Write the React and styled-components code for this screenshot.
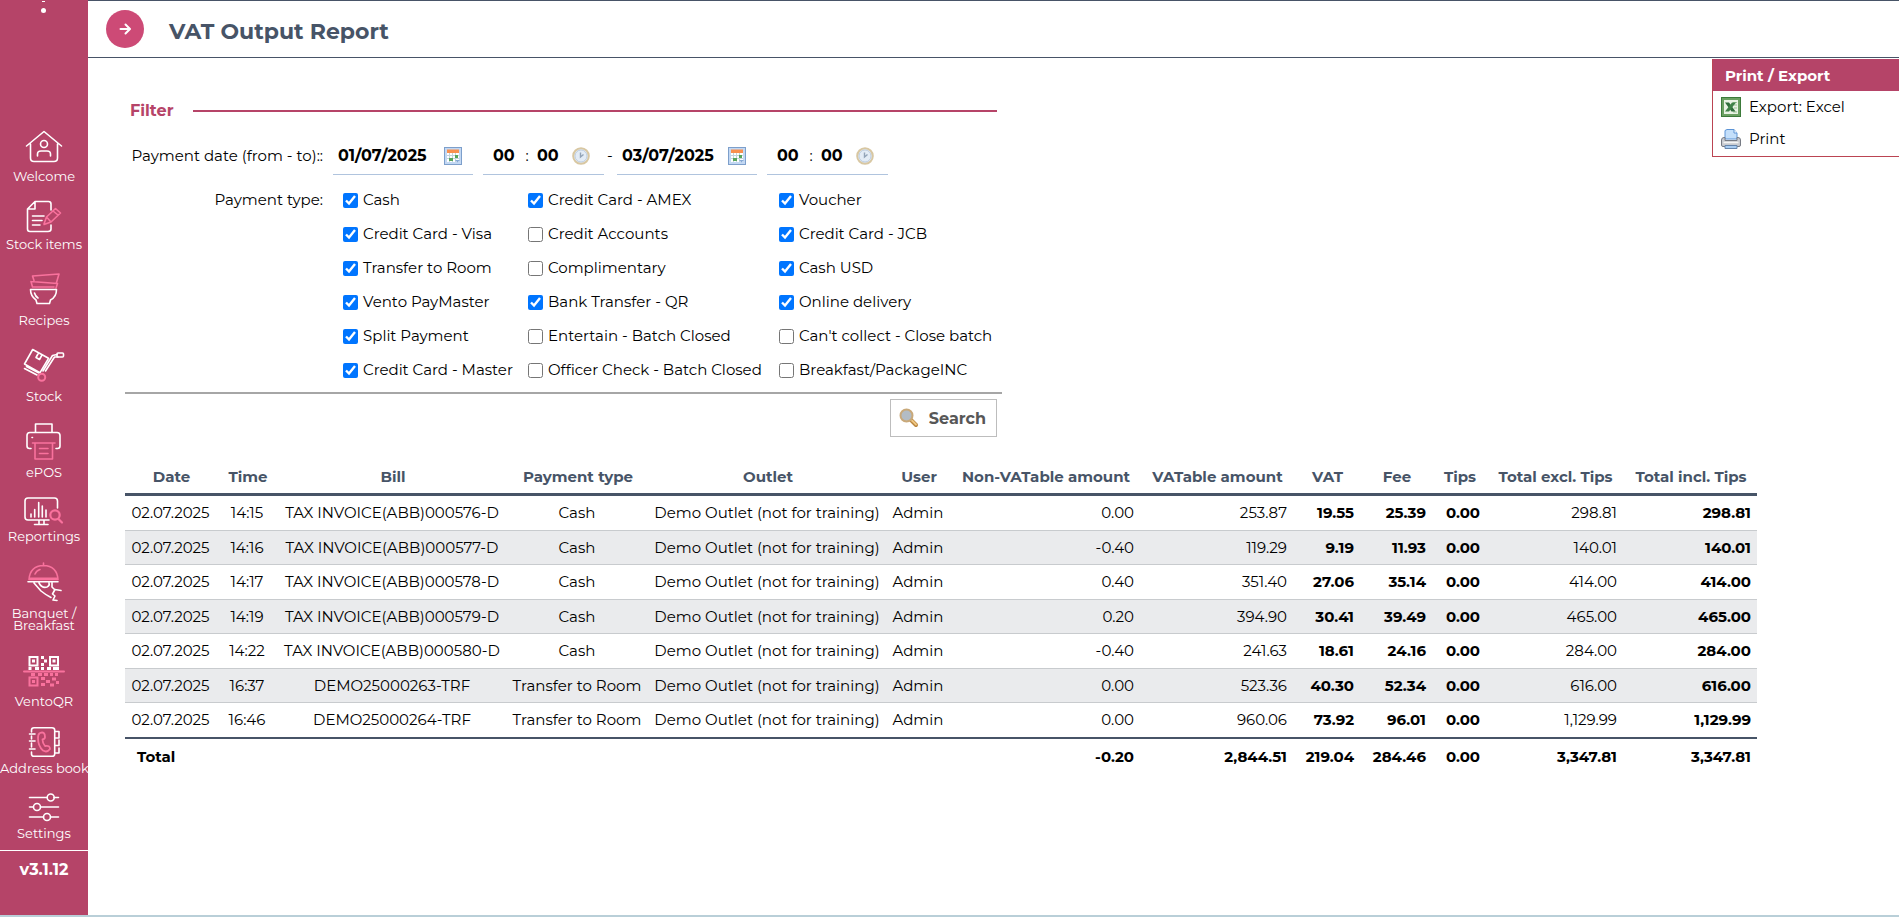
import React, { useState } from 'react'
import styled, { createGlobalStyle } from 'styled-components'

const GlobalStyle = createGlobalStyle`
    * {
        box-sizing: border-box;
    }
    body {
        margin: 0;
        background: white;
        color: black;
        font-family: Montserrat, Inter, sans-serif;
        font-size: 15px;
        line-height: 20px;
    }
    input, button {
        font-family: inherit;
    }
`

const Page = styled.div`
    display: flex;
    min-height: 100vh;
    border-bottom: 2px solid #b9cfd8;
`

const Sidebar = styled.nav`
    flex: 0 0 88px;
    min-width: 0;
    background: #b54468;
    color: white;
`

const Brand = styled.div`
    height: 108px;
    text-align: center;
`

const MenuLink = styled.a`
    display: block;
    padding-top: 12px;
    color: white;
    font-size: 13px;
    line-height: ${props => props.$twoLines ? '12px' : '16px'};
    text-align: center;
    text-decoration: none;
    white-space: pre;
    svg {
        display: block;
        margin: 0 auto;
    }
`

const Version = styled.div`
    margin-top: 9px;
    padding-top: 9px;
    border-top: 1px solid white;
    font-size: 16px;
    font-weight: 700;
    text-align: center;
`

const Main = styled.main`
    flex: 1;
    min-width: 0;
`

const Header = styled.header`
    display: flex;
    align-items: center;
    gap: 25px;
    height: 58px;
    padding-left: 18px;
    border-top: 1px solid #475467;
    border-bottom: 1px solid #475467;
`

const RoundButton = styled.button`
    display: flex;
    align-items: center;
    justify-content: center;
    width: 38px;
    height: 38px;
    padding: 0;
    border: 0;
    border-radius: 50%;
    background: #cd4a76;
`

const Title = styled.h1`
    margin: 0;
    padding-top: 6px;
    color: #475467;
    font-size: 22px;
    line-height: 28px;
    font-weight: 700;
`

const TopRow = styled.div`
    display: flex;
    align-items: flex-start;
    justify-content: space-between;
    padding-left: 37px;
`

const FilterForm = styled.form`
    width: 877px;
    padding-top: 43px;
`

const FilterTitle = styled.h2`
    display: flex;
    align-items: center;
    gap: 19px;
    margin: 0 5px 16px;
    color: #b64468;
    font-size: 16px;
    line-height: 20px;
    font-weight: 700;
    &::after {
        content: '';
        flex: 1;
        height: 2px;
        background: #b64468;
    }
`

const FormRow = styled.div`
    display: grid;
    grid-template-columns: 193px 1fr;
    gap: 10px;
    padding-left: 5px;
    margin-bottom: 8px;
`

const RowLabel = styled.div`
    line-height: ${props => props.$height};
    text-align: right;
    white-space: nowrap;
`

const Fields = styled.div`
    display: flex;
    align-items: center;
    gap: 10px;
`

const Field = styled.div`
    display: flex;
    align-items: center;
    width: ${props => props.$wide ? '140px' : '121px'};
    height: 38px;
    padding: 0 0 0 ${props => props.$wide ? '5px' : '10px'};
    border-bottom: 1px solid #b0c4de;
`

const Dash = styled.span`
    width: 13px;
    margin-right: -10px;
    padding-left: 3px;
    margin-left: -10px;
`

const TextInput = styled.input`
    width: ${props => props.$wide ? '106px' : '24px'};
    padding: 0;
    border: 0;
    outline: 0;
    background: none;
    color: black;
    font-size: 16px;
    line-height: 20px;
    font-weight: 700;
`

const Colon = styled.span`
    width: 20px;
    text-align: center;
`

const IconButton = styled.button`
    display: flex;
    width: 18px;
    height: 18px;
    margin-left: ${props => props.$gap || 0};
    padding: 0;
    border: 0;
    background: none;
`

const CheckGrid = styled.div`
    display: grid;
    grid-template-columns: 185px 251px 1fr;
    grid-auto-rows: 34px;
    padding-left: 10px;
`

const CheckLabel = styled.label`
    display: flex;
    align-items: center;
    gap: 5px;
    white-space: nowrap;
`

const CheckBox = styled.input`
    width: 15px;
    height: 15px;
    margin: 0;
    accent-color: #0075ff;
`

const Actions = styled.div`
    display: flex;
    justify-content: flex-end;
    padding: 5px 5px 0;
    margin-top: -3px;
    border-top: 2px solid #a6a6a6;
`

const SearchButton = styled.button`
    display: flex;
    align-items: center;
    justify-content: space-between;
    width: 107px;
    height: 38px;
    padding: 0 10px 0 8px;
    border: 1px solid #bdbdbd;
    background: white;
    color: #575757;
    font-size: 16px;
    font-weight: 700;
`

const Panel = styled.aside`
    width: 187px;
    margin-top: 1px;
    padding-bottom: 1px;
    border-left: 1px solid #bb4452;
    border-bottom: 1px solid #bb4452;
`

const PanelTitle = styled.h2`
    margin: 0;
    padding: 7px 12px 5px;
    background: #b54468;
    color: white;
    font-size: 15px;
    line-height: 20px;
    font-weight: 700;
`

const PanelLink = styled.a`
    display: flex;
    align-items: center;
    gap: 8px;
    height: 32px;
    padding-left: 8px;
    color: black;
    text-decoration: none;
`

const Table = styled.table`
    width: 1632px;
    margin: 23px 0 0 37px;
    border-collapse: separate;
    border-spacing: 0;
    white-space: nowrap;
`

const Th = styled.th`
    height: 36px;
    padding: 0 0 0 2px;
    border-bottom: 3px solid #475467;
    color: #475467;
    font-size: 15px;
    font-weight: 700;
    text-align: center;
`

const Td = styled.td`
    padding: 0 6px;
    border-bottom: 1px solid #c8cbce;
    font-weight: ${props => props.$bold ? 700 : 400};
    text-align: ${props => props.$right ? 'right' : 'center'};
`

const Row = styled.tr`
    height: 35px;
    &:nth-child(even) {
        height: 34px;
        background: #eaebed;
    }
    &:last-child {
        height: 36px;
    }
    &:last-child td {
        border-bottom: 2px solid #475467;
    }
`

const TotalCell = styled.td`
    height: 35px;
    padding: 0 6px;
    font-weight: 700;
    text-align: right;
    &:first-child {
        padding-left: 12px;
        text-align: left;
    }
`

const pink = '#f9729d'

const line = { fill: 'none', stroke: 'white', strokeWidth: 1.6, strokeLinecap: 'round', strokeLinejoin: 'round' }

const menu = [
    {
        name: 'Welcome', height: 48, icon: <>
            <path d="M12.500 26L30 11.500L47.500 26M16.500 24V38Q16.500 41.500 20 41.500H40Q43.500 41.500 43.500 38V24" />
            <circle cx="30" cy="24" r="3.500" />
            <path d="M23.500 36V34Q23.500 31 27 31H33Q36.500 31 36.500 34V36" />
        </>
    },
    {
        name: 'Stock items', height: 40, icon: <>
            <path d="M37 14V8Q37 5.500 34.500 5.500H21L13.500 13V33Q13.500 35.500 16 35.500H34Q37 35.500 37 33V29M21 6V13H14M18.500 20H30M18.500 24.500H28M18.500 29H26" />
            <path stroke={pink} d="M30 28L32.500 21L41.500 12.500L46.500 17L37 26L30 28.500M32.500 21L37 26M39 15L44 19" />
        </>
    },
    {
        name: 'Recipes', height: 48, icon: <>
            <path stroke={pink} d="M18.500 12L45 10L42.500 18.500M18.500 12L20 16.500M17 17.500L43.500 19.500L42 24M17 17.500L18.500 23H40" />
            <path d="M16.500 25.500H42.500Q42.500 33 36.500 36L35.500 39.500H23L22 36Q16.500 32 16.500 25.500ZM20.500 29Q21.500 32.500 24 34" />
        </>
    },
    {
        name: 'Stock', height: 48, icon: <>
            <path d="M18.700 9.500L34.500 18.300L26 32.700L10.500 24ZM24.500 13L22 17.500L25.500 19.500L28 15M10.500 28.500L23 35M12.500 26.500L24.500 32.800M29 31L38.500 15.500L43 14.500M31.500 31L40.500 17H44" />
            <rect x="43" y="13" width="6.500" height="4" rx="1" />
            <circle stroke={pink} strokeWidth="2" cx="27.700" cy="37.300" r="3.500" />
        </>
    },
    {
        name: 'ePOS', height: 48, icon: <>
            <path d="M21.500 16V8H38V16M17 32.500H15.500Q13 32.500 13 30V19.500Q13 16.500 16 16.500H43Q46 16.500 46 19.500V30Q46 32.500 43.500 32.500H42M18 21.500H18.500" />
            <path stroke={pink} d="M18.500 27H41M21 27V43H38.500V27M25.500 32.500H34M25.500 37.500H34" />
        </>
    },
    {
        name: 'Reportings', height: 36, icon: <>
            <path d="M35 28H14Q11 28 11 25V9Q11 6 14 6H40.500Q43.500 6 43.500 9V16M25 28V32M30 28V32M20.500 32.500H34" />
            <path d="M17 25V22M20.700 25V17.500M24.700 25V10.500M28.300 25V14M32 25V18" />
            <g stroke={pink} strokeWidth="2.200"><circle cx="41" cy="23" r="4.700" /><path d="M44.500 27L48 30.500" /></g>
        </>
    },
    {
        name: 'Banquet /\nBreakfast', height: 51, twoLines: true, icon: <>
            <g stroke={pink}>
                <path fill={pink} stroke="none" d="M15 24V21.500H44V24Z" />
                <path d="M15 23.500Q16 10 29.500 9.500Q43 10 44 23.500ZM29.500 9V7M21 18Q22.500 14.500 26 13.500" />
            </g>
            <path d="M14 25.800H44M20 27L27 35Q32 39 37 41.500M25 27Q28 32.500 33 31Q36 30 35 27M38 27V31L40 33M47 34.500L41 33.500L38.500 38L41 40L39 44L43 44.500" />
        </>
    },
    {
        name: 'VentoQR', height: 50, icon: <>
            <g strokeWidth="2" strokeLinejoin="miter">
                <path d="M15.500 14H23.500V22.500H15.500ZM36 14H44V22.500H36Z" />
                <path stroke={pink} d="M15.500 34.500H23.500V42.500H15.500Z" />
            </g>
            <path strokeWidth="3" strokeLinecap="butt" d="M18 18H21M38.500 18H41.500M27 14.500H30M30 18H33M27 21.500H30M14.500 25.500H17.500M21 25.500H25M27 25.500H30M33 25.500H37M39 25.500H45" />
            <path stroke={pink} strokeWidth="3" strokeLinecap="butt" d="M17 31.500H21M24 31.500H28M30 31.500H34M36 31.500H39M41 31.500H44M18 38.500H21M27 35.500H31M32 38.500H36M27 41.500H31M38 36H42M42 39.500H45M36 42H40" />
            <path stroke={pink} strokeWidth="2" d="M10 28.500H50" />
        </>
    },
    {
        name: 'Address book', height: 39, icon: <>
            <path d="M17.500 11V9Q17.500 6.700 20 6.700H38Q40.700 6.700 40.700 9V33Q40.700 35.300 38 35.300H20Q17.500 35.300 17.500 33V31M17.500 15V18M17.500 22V26M15.500 13H21M15.500 20H21M15.500 28H21M41 10.500H45V17H41M45 19V24.500H41M45 27V32H41" />
            <path stroke={pink} strokeWidth="1.800" d="M26 12Q31 10 31 16Q31 18 28.500 18.500Q28.500 22 31 25Q36 24 36 28Q33 32 29 29.500Q24 25 24 17Q24 13 26 12Z" />
        </>
    },
    {
        name: 'Settings', height: 37, icon: <>
            <path d="M15.500 9.500H33M40 9.500H44.500M15.500 19H19M26.500 19H44.500M15.500 29H29.500M36.500 29H44.500" />
            <circle cx="36.700" cy="9.500" r="3.500" />
            <circle cx="23" cy="19" r="3.500" />
            <circle cx="33" cy="29" r="3.500" />
        </>
    },
]

const paymentTypes = [
    ['Cash', true], ['Credit Card - AMEX', true], ['Voucher', true],
    ['Credit Card - Visa', true], ['Credit Accounts', false], ['Credit Card - JCB', true],
    ['Transfer to Room', true], ['Complimentary', false], ['Cash USD', true],
    ['Vento PayMaster', true], ['Bank Transfer - QR', true], ['Online delivery', true],
    ['Split Payment', true], ['Entertain - Batch Closed', false], ["Can't collect - Close batch", false],
    ['Credit Card - Master', true], ['Officer Check - Batch Closed', false], ['Breakfast/PackageINC', false],
]

const columns = [
    ['Date', 91], ['Time', 62], ['Bill', 228], ['Payment type', 142], ['Outlet', 238], ['User', 64],
    ['Non-VATable amount', 190], ['VATable amount', 153], ['VAT', 67], ['Fee', 72], ['Tips', 54],
    ['Total excl. Tips', 137], ['Total incl. Tips', 134],
]

const outlet = 'Demo Outlet (not for training)'

const bills = [
    ['02.07.2025', '14:15', 'TAX INVOICE(ABB)000576-D', 'Cash', outlet, 'Admin', '0.00', '253.87', '19.55', '25.39', '0.00', '298.81', '298.81'],
    ['02.07.2025', '14:16', 'TAX INVOICE(ABB)000577-D', 'Cash', outlet, 'Admin', '-0.40', '119.29', '9.19', '11.93', '0.00', '140.01', '140.01'],
    ['02.07.2025', '14:17', 'TAX INVOICE(ABB)000578-D', 'Cash', outlet, 'Admin', '0.40', '351.40', '27.06', '35.14', '0.00', '414.00', '414.00'],
    ['02.07.2025', '14:19', 'TAX INVOICE(ABB)000579-D', 'Cash', outlet, 'Admin', '0.20', '394.90', '30.41', '39.49', '0.00', '465.00', '465.00'],
    ['02.07.2025', '14:22', 'TAX INVOICE(ABB)000580-D', 'Cash', outlet, 'Admin', '-0.40', '241.63', '18.61', '24.16', '0.00', '284.00', '284.00'],
    ['02.07.2025', '16:37', 'DEMO25000263-TRF', 'Transfer to Room', outlet, 'Admin', '0.00', '523.36', '40.30', '52.34', '0.00', '616.00', '616.00'],
    ['02.07.2025', '16:46', 'DEMO25000264-TRF', 'Transfer to Room', outlet, 'Admin', '0.00', '960.06', '73.92', '96.01', '0.00', '1,129.99', '1,129.99'],
]

const totals = ['-0.20', '2,844.51', '219.04', '284.46', '0.00', '3,347.81', '3,347.81']

const boldColumns = [8, 9, 10, 12]

function CalendarIcon() {
    return (
        <svg width="18" height="18" viewBox="0 0 18 18">
            <rect x="0.500" y="0.500" width="17" height="17" fill="#c3d8f3" stroke="#7d9fcb" />
            <rect x="3" y="3" width="12" height="12" fill="white" />
            <rect x="3" y="2.500" width="12" height="3.500" fill="#f9904f" />
            <path d="M3 8.500H15M3 11.500H15M5.500 6V15M8.500 6V15M11.500 6V15" stroke="#c3d3dc" />
            <path d="M11 8H14V11H11ZM5 11H9V14H5Z" fill="#58a65b" />
            <path d="M11 13H16L13.500 15.500Z" fill="#86a9d6" />
        </svg>
    )
}

function ClockIcon() {
    return (
        <svg width="18" height="18" viewBox="0 0 18 18">
            <circle cx="9" cy="9" r="7.800" fill="#e6edf5" stroke="#d8c7a2" strokeWidth="2" />
            <circle cx="9" cy="9" r="6" fill="#e3ecf6" stroke="#b4c5da" strokeWidth="0.800" />
            <path d="M8.500 5.500V10L11.500 7.500" fill="none" stroke="#93a4b8" strokeWidth="1.400" />
        </svg>
    )
}

function DateField({ label, value, onChange }) {
    return (
        <Field $wide>
            <TextInput $wide aria-label={label} value={value} onChange={e => onChange(e.target.value)} />
            <IconButton type="button" aria-label={label}><CalendarIcon /></IconButton>
        </Field>
    )
}

function TimeField({ label }) {
    return (
        <Field>
            <TextInput aria-label={label + ' hour'} defaultValue="00" />
            <Colon>:</Colon>
            <TextInput aria-label={label + ' minute'} defaultValue="00" />
            <IconButton type="button" $gap="11px" aria-label={label}><ClockIcon /></IconButton>
        </Field>
    )
}

function Filter() {
    const [from, setFrom] = useState('01/07/2025')
    const [to, setTo] = useState('03/07/2025')

    return (
        <FilterForm onSubmit={e => e.preventDefault()}>
            <FilterTitle>Filter</FilterTitle>
            <FormRow>
                <RowLabel $height="38px">Payment date (from - to)::</RowLabel>
                <Fields>
                    <DateField label="Date from" value={from} onChange={setFrom} />
                    <TimeField label="Time from" />
                    <Dash>-</Dash>
                    <DateField label="Date to" value={to} onChange={setTo} />
                    <TimeField label="Time to" />
                </Fields>
            </FormRow>
            <FormRow>
                <RowLabel $height="34px">Payment type:</RowLabel>
                <CheckGrid>
                    {paymentTypes.map(([name, checked]) => (
                        <CheckLabel key={name}>
                            <CheckBox type="checkbox" defaultChecked={checked} />
                            {name}
                        </CheckLabel>
                    ))}
                </CheckGrid>
            </FormRow>
            <Actions>
                <SearchButton type="submit">
                    <svg width="20" height="20" viewBox="0 0 20 20">
                        <path d="M12 12L17 17" stroke="#b9853f" strokeWidth="4" strokeLinecap="round" />
                        <path d="M13 12.500L17 16.500" stroke="#f0c883" strokeWidth="1.800" strokeLinecap="round" />
                        <circle cx="7.500" cy="7.500" r="6" fill="#b3bcc4" stroke="#c9a97a" strokeWidth="2" />
                    </svg>
                    Search
                </SearchButton>
            </Actions>
        </FilterForm>
    )
}

function PrintPanel() {
    return (
        <Panel>
            <PanelTitle>Print / Export</PanelTitle>
            <PanelLink href="#excel">
                <svg width="20" height="20" viewBox="0 0 20 20">
                    <rect x="0.500" y="0.500" width="19" height="19" fill="#6ba062" stroke="#3c7a3a" />
                    <rect x="3" y="3" width="14" height="14" fill="#e9f2e4" />
                    <path d="M12 5.500H16M13 8H16M13 11H16M12 15H16" stroke="#9fc497" />
                    <path d="M4 5.500H8L14.500 14.500H10.500Z" fill="#2f6d3a" />
                    <path d="M11 5.500H15L8 14.500H4Z" fill="#3f8147" />
                </svg>
                Export: Excel
            </PanelLink>
            <PanelLink href="#print">
                <svg width="20" height="20" viewBox="0 0 20 20">
                    <path d="M4 10V1.500L6 0.500H13L16 4V10Z" fill="#c4dffa" stroke="#5c94d6" />
                    <path d="M13 0.500V4H16" fill="white" stroke="#5c94d6" />
                    <path d="M0.500 11Q0.500 8.500 3 8.500H4V11.500H16V8.500H17Q19.500 8.500 19.500 11V16Q19.500 17.500 18 17.500H2Q0.500 17.500 0.500 16Z" fill="#c9cbd0" stroke="#777b84" />
                    <path d="M2.500 13.500H17.500" stroke="#f5f5f5" strokeWidth="1.500" />
                    <path d="M4 16.500H16V19.500H4Z" fill="#a9cdf3" stroke="#6685ab" />
                </svg>
                Print
            </PanelLink>
        </Panel>
    )
}

function ReportTable() {
    return (
        <Table>
            <colgroup>
                {columns.map(([name, width]) => <col key={name} width={width} />)}
            </colgroup>
            <thead>
                <tr>
                    {columns.map(([name]) => <Th key={name} scope="col">{name}</Th>)}
                </tr>
            </thead>
            <tbody>
                {bills.map(bill => (
                    <Row key={bill[2]}>
                        {bill.map((cell, i) => (
                            <Td key={i} $right={i > 5} $bold={boldColumns.includes(i)}>{cell}</Td>
                        ))}
                    </Row>
                ))}
            </tbody>
            <tfoot>
                <tr>
                    <TotalCell colSpan={6}>Total</TotalCell>
                    {totals.map((total, i) => <TotalCell key={i}>{total}</TotalCell>)}
                </tr>
            </tfoot>
        </Table>
    )
}

export default function App() {
    return (
        <Page>
            <GlobalStyle />
            <Sidebar>
                <Brand>
                    <svg width="8" height="14" viewBox="0 0 8 14">
                        <path d="M2 0H5V1H2Z" fill="white" />
                        <circle cx="3.500" cy="9.500" r="2.500" fill="white" />
                    </svg>
                </Brand>
                {menu.map(item => (
                    <MenuLink key={item.name} href="#menu" $twoLines={item.twoLines}>
                        <svg width="60" height={item.height} viewBox={`0 0 60 ${item.height}`} {...line}>
                            {item.icon}
                        </svg>
                        {item.name}
                    </MenuLink>
                ))}
                <Version>v3.1.12</Version>
            </Sidebar>
            <Main>
                <Header>
                    <RoundButton type="button" aria-label="Open menu">
                        <svg width="14" height="14" viewBox="0 0 14 14" fill="none" stroke="white" strokeWidth="2" strokeLinecap="round" strokeLinejoin="round">
                            <path d="M2.500 7H11.500M7.500 2.500L12 7L7.500 11.500" />
                        </svg>
                    </RoundButton>
                    <Title>VAT Output Report</Title>
                </Header>
                <TopRow>
                    <Filter />
                    <PrintPanel />
                </TopRow>
                <ReportTable />
            </Main>
        </Page>
    )
}
